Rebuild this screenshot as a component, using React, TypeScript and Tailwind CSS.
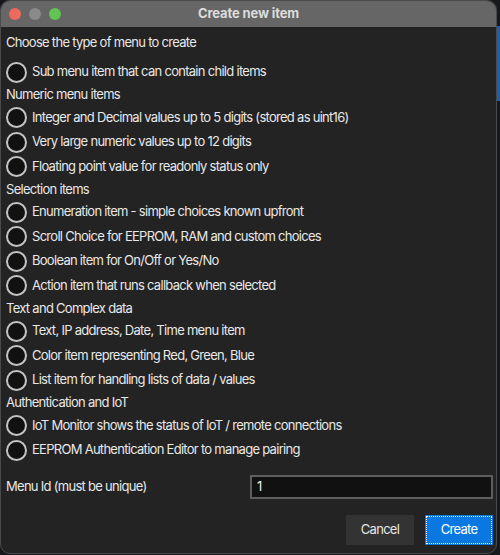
import React from "react";

type Row = { kind: "head"; text: string } | { kind: "radio"; text: string };

const rows: Row[] = [
  { kind: "radio", text: "Sub menu item that can contain child items" },
  { kind: "head", text: "Numeric menu items" },
  { kind: "radio", text: "Integer and Decimal values up to 5 digits (stored as uint16)" },
  { kind: "radio", text: "Very large numeric values up to 12 digits" },
  { kind: "radio", text: "Floating point value for readonly status only" },
  { kind: "head", text: "Selection items" },
  { kind: "radio", text: "Enumeration item - simple choices known upfront" },
  { kind: "radio", text: "Scroll Choice for EEPROM, RAM and custom choices" },
  { kind: "radio", text: "Boolean item for On/Off or Yes/No" },
  { kind: "radio", text: "Action item that runs callback when selected" },
  { kind: "head", text: "Text and Complex data" },
  { kind: "radio", text: "Text, IP address, Date, Time menu item" },
  { kind: "radio", text: "Color item representing Red, Green, Blue" },
  { kind: "radio", text: "List item for handling lists of data / values" },
  { kind: "head", text: "Authentication and IoT" },
  { kind: "radio", text: "IoT Monitor shows the status of IoT / remote connections" },
  { kind: "radio", text: "EEPROM Authentication Editor to manage pairing" },
];

export default function App() {
  return (
    <div className="flex h-[555px] w-[500px] bg-[#16181c] font-['Inter','Liberation_Sans',sans-serif] text-[13px] tracking-[-0.055em] text-[#e8e8e8]">
      {/* window */}
      <div className="flex h-[554px] w-[497px] shrink-0 flex-col overflow-hidden rounded-[10px] border border-[#4a4a4a] bg-[#232323]">
        {/* title bar */}
        <div className="relative flex h-[26px] shrink-0 items-center justify-center bg-[#666666]">
          <div className="absolute left-[8px] top-[7px] flex gap-[8px]">
            <span className="h-[12px] w-[12px] rounded-full bg-[#ed6a5e]" />
            <span className="h-[12px] w-[12px] rounded-full bg-[#8a8a8a]" />
            <span className="h-[12px] w-[12px] rounded-full bg-[#61c554]" />
          </div>
          <span className="text-[13px] font-bold tracking-[-0.01em] text-[#dcdcdc]">Create new item</span>
        </div>

        <div className="flex flex-1 flex-col pl-[5px] pr-[3px] pt-[4px]">
          <div className="flex h-[24px] items-center">Choose the type of menu to create</div>
          <div className="mt-[4.75px] flex flex-col">
            {rows.map((r) =>
              r.kind === "head" ? (
                <div key={r.text} className="flex h-[21px] items-center">
                  {r.text}
                </div>
              ) : (
                <div key={r.text} className="flex h-[24.5px] items-center gap-[5px]">
                  <span className="h-[21px] w-[21px] shrink-0 rounded-full border-2 border-[#c4c4c4] bg-[#111111]" />
                  <span>{r.text}</span>
                </div>
              )
            )}
          </div>

          <div className="mt-[12.5px] flex h-[24px] items-center justify-between">
            <span>Menu Id (must be unique)</span>
            <div className="flex h-[24px] w-[243px] items-center border-2 border-[#5e5e5e] bg-[#111111] px-[5px] text-[#f0f0f0]">
              1
            </div>
          </div>

          <div className="mt-[16px] flex justify-end gap-[11px]">
            <button className="h-[30px] w-[68px] bg-[#333333] text-[#e6e6e6]">Cancel</button>
            <button className="h-[30px] w-[68px] bg-[#0a78e0] text-white outline-1 outline-dotted outline-offset-[-2px] outline-white">
              Create
            </button>
          </div>
        </div>
      </div>

      {/* desktop behind the window */}
      <div className="flex flex-1 flex-col pt-[26px]">
        <div className="h-[75px] bg-[#1d5fa8]" />
      </div>
    </div>
  );
}
